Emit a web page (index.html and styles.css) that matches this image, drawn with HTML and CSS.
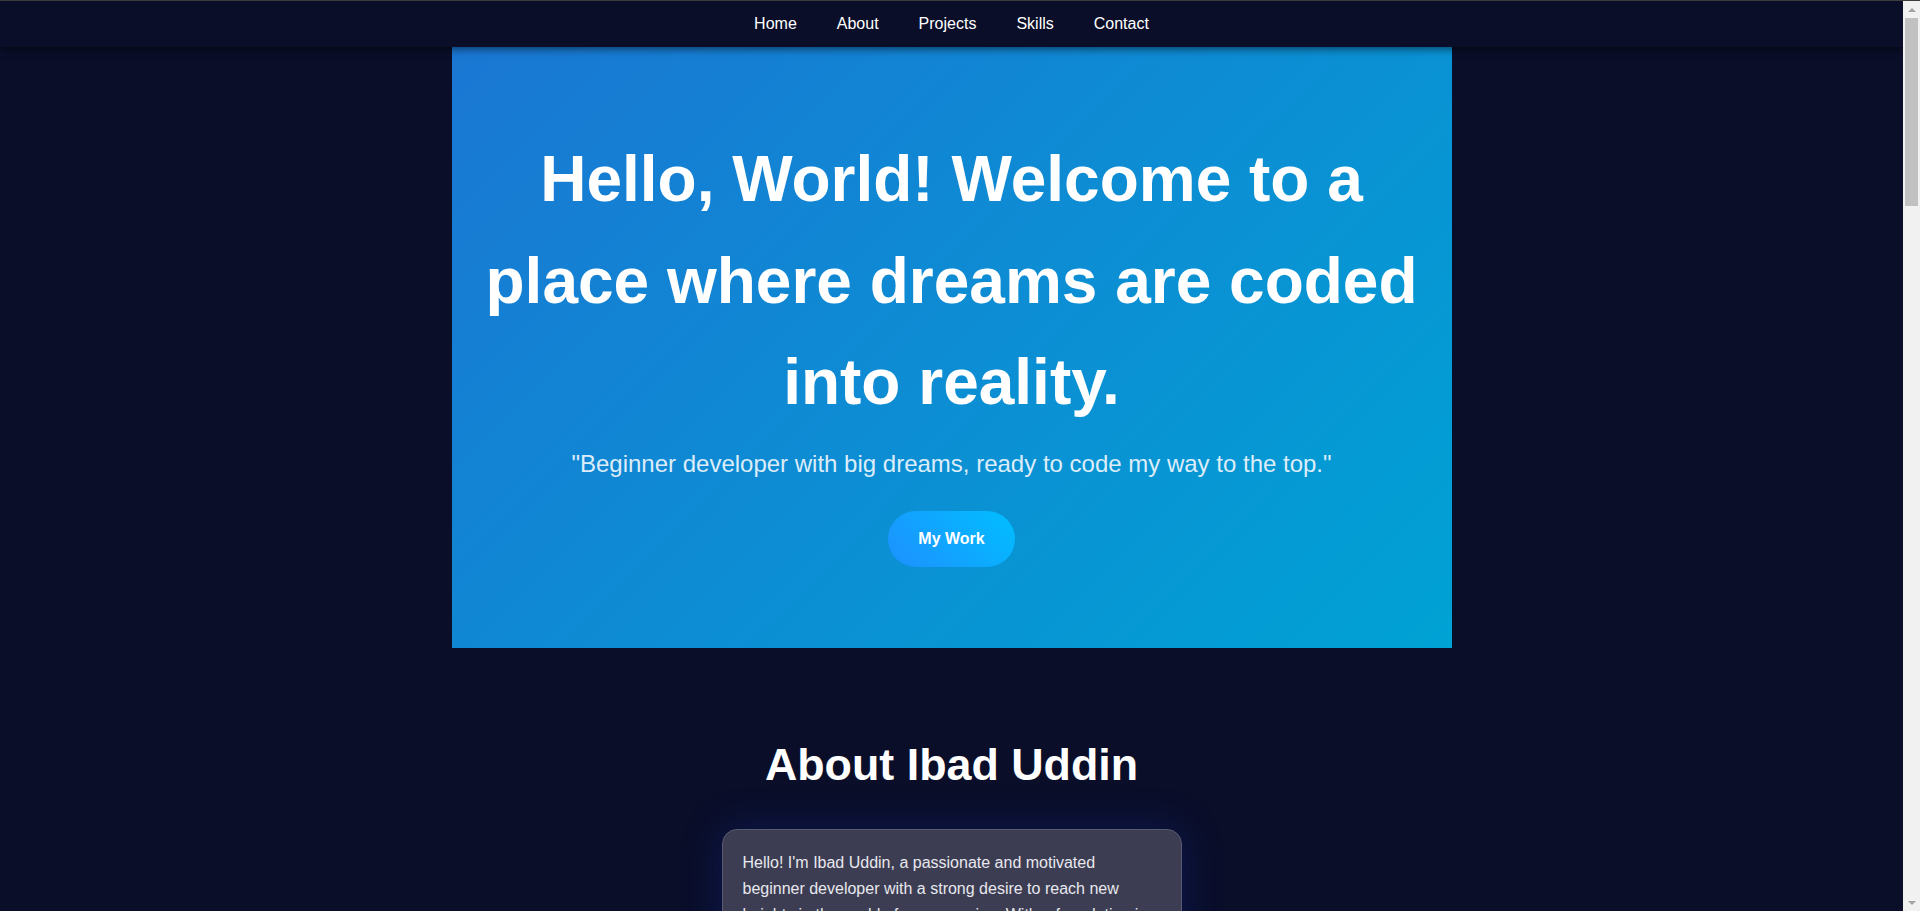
FILE: index.html
```html
<!DOCTYPE html>
<html lang="en">
<head>
<meta charset="utf-8">
<title>Ibad Uddin</title>
<link rel="stylesheet" href="styles.css">
</head>
<body>
<nav class="topnav">
  <a href="#home">Home</a>
  <a href="#about">About</a>
  <a href="#projects">Projects</a>
  <a href="#skills">Skills</a>
  <a href="#contact">Contact</a>
</nav>

<header class="hero" id="home">
  <h1 class="hero-title">Hello, World! Welcome to a place where dreams are coded into reality.</h1>
  <p class="hero-tagline">"Beginner developer with big dreams, ready to code my way to the top."</p>
  <a class="hero-btn" href="#projects">My Work</a>
</header>

<section class="about" id="about">
  <h2 class="section-title">About Ibad Uddin</h2>
  <div class="about-card">
    <p>Hello! I'm Ibad Uddin, a passionate and motivated beginner developer with a strong desire to reach new heights in the world of programming. With a foundation in HTML, CSS, and JavaScript, I am eager to learn and grow every day. My goal is to build projects that make a difference and to turn my dreams into reality, one line of code at a time.</p>
  </div>
</section>

<section class="block" id="projects">
  <h2 class="section-title">Projects</h2>
  <div class="about-card">
    <p>Personal Portfolio Website &mdash; a responsive site built with HTML and CSS.</p>
  </div>
</section>

<section class="block" id="skills">
  <h2 class="section-title">Skills</h2>
  <div class="about-card">
    <p>HTML, CSS, JavaScript, Git and GitHub.</p>
  </div>
</section>

<section class="block" id="contact">
  <h2 class="section-title">Contact</h2>
  <div class="about-card">
    <p>Feel free to reach out for collaborations or just a friendly hello.</p>
  </div>
</section>

<div class="scrollbar" aria-hidden="true">
  <span class="sb-btn sb-up"></span>
  <span class="sb-thumb"></span>
  <span class="sb-track"></span>
  <span class="sb-btn sb-down"></span>
</div>
</body>
</html>
```

FILE: styles.css
```css
html, body {
  margin: 0;
  padding: 0;
}

body {
  margin-right: 17px;
  background: #0a0e29;
  color: #ffffff;
  font-family: "Liberation Sans", Arial, sans-serif;
}

.topnav {
  position: sticky;
  top: 0;
  z-index: 10;
  display: flex;
  justify-content: center;
  gap: 40px;
  padding: 14px 0;
  background: #0a0e29;
  border-top: 1px solid #3c3c3c;
  box-shadow: 0 2px 8px rgba(0, 0, 0, 0.55);
}

.topnav a {
  color: #ffffff;
  text-decoration: none;
  font-size: 16px;
  line-height: 18px;
}

.hero {
  box-sizing: border-box;
  max-width: 1000px;
  margin: 0 auto;
  padding: 82px 20px 81px;
  display: flex;
  flex-direction: column;
  align-items: center;
  text-align: center;
  background: linear-gradient(135deg, #1a77d3 0%, #00a2d4 100%);
}

.hero-title {
  margin: 0 0 11px;
  font-size: 64px;
  line-height: 101.5px;
  font-weight: bold;
  color: #ffffff;
}

.hero-tagline {
  margin: 0;
  font-size: 24px;
  line-height: 1.6;
  color: #dcedf9;
}

.hero-btn {
  display: inline-block;
  margin-top: 28px;
  padding: 19px 30px;
  border-radius: 30px;
  background: linear-gradient(45deg, #1e90ff, #00bfff);
  color: #ffffff;
  font-size: 16px;
  font-weight: bold;
  text-decoration: none;
}

.about {
  padding: 91px 20px 60px;
}

.block {
  min-height: 900px;
  padding: 60px 20px;
}

.section-title {
  margin: 0 0 39px;
  text-align: center;
  font-size: 44.8px;
  line-height: normal;
  font-weight: bold;
  color: #ffffff;
}

.about-card {
  box-sizing: border-box;
  max-width: 460px;
  margin: 0 auto;
  padding: 20px;
  border: 1px solid #585a6e;
  border-radius: 15px;
  background: #3c3d52;
  box-shadow: 0 0 40px rgba(25, 55, 200, 0.25);
}

.about-card p {
  margin: 0;
  font-size: 16px;
  line-height: 26px;
  color: #e8e8ee;
}

/* window scrollbar */
.scrollbar {
  position: fixed;
  top: 0;
  right: 0;
  z-index: 20;
  box-sizing: border-box;
  width: 17px;
  height: 100vh;
  display: flex;
  flex-direction: column;
  background: #f1f1f1;
  border-top: 1px solid #3c3c3c;
}

.sb-btn {
  flex: 0 0 17px;
  display: flex;
  align-items: center;
  justify-content: center;
}

.sb-up::before,
.sb-down::before {
  content: "";
  width: 0;
  height: 0;
  border-left: 4px solid transparent;
  border-right: 4px solid transparent;
}

.sb-up::before {
  border-bottom: 4px solid #a3a3a3;
}

.sb-down::before {
  border-top: 4px solid #a3a3a3;
}

.sb-thumb {
  flex: 0 0 188px;
  margin: 0 2px;
  background: #c1c1c1;
}

.sb-track {
  flex: 1 1 auto;
}
```
